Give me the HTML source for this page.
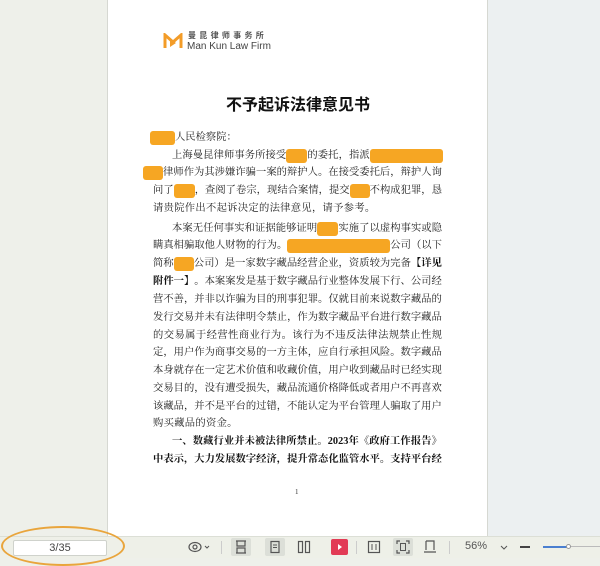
<!DOCTYPE html>
<html><head><meta charset="utf-8"><style>
*{margin:0;padding:0;box-sizing:border-box}
body{width:600px;height:558px;overflow:hidden;background:#eef0ea;position:relative;font-family:"Liberation Serif","Noto Serif CJK SC",serif;}
.rbg{position:absolute;left:488px;top:0;width:112px;height:536px;background:#ecf0f1}
.page{position:absolute;left:107px;top:0;width:381px;height:536px;background:#fff;border-left:1px solid #d6d8d2;border-right:1px solid #d6d8d2}
.l{position:absolute;left:153px;width:289px;font-size:10.3px;line-height:14px;color:#222;white-space:nowrap;display:flex;justify-content:space-between;align-items:center}
.b{display:inline-block;background:#f6a623;border-radius:3px;height:14px}
.bold{font-weight:bold;color:#111}
.tb{position:absolute;left:0;top:536px;width:600px;height:22px;background:#eef0e8;border-top:1px solid #dcdfd6}
.pg{position:absolute;left:13px;top:540px;width:94px;height:16px;background:#fff;border:1px solid #cfd2cc;border-radius:2px;font:11px "Liberation Sans",sans-serif;color:#444;text-align:center;line-height:15px}
.ell{position:absolute;left:1px;top:526px;width:124px;height:40px;border:2px solid #e9a53c;border-radius:50%}
.ic{position:absolute;top:540px;font:11px "Liberation Sans",sans-serif;color:#555}
</style></head><body>
<div class="rbg"></div>
<div class="page"></div>
<svg style="position:absolute;left:163px;top:33px" width="20" height="16" viewBox="0 0 20 16"><path d="M2 15V2l8 7 8-7v13" fill="none" stroke="#f39c28" stroke-width="3"/><path d="M7 6l6 4-6 4z" fill="#f39c28"/></svg>
<div style="position:absolute;left:188px;top:31px;font:bold 8px/9px 'Noto Sans CJK SC',sans-serif;color:#555;letter-spacing:3.3px">曼昆律师事务所</div>
<div style="position:absolute;left:187px;top:42px;font:10px/9px 'Liberation Sans',sans-serif;color:#444">Man Kun Law Firm</div>
<div style="position:absolute;left:0;width:596px;top:91px;text-align:center;font:bold 16px 'Noto Sans CJK SC',sans-serif;color:#111">不予起诉法律意见书</div>

<div class="l" style="top:131px;left:150px;justify-content:flex-start"><span class="b" style="width:25px"></span><span>人民检察院：</span></div>
<div class="l" style="top:149px;left:172px;width:271px"><span>上</span><span>海</span><span>曼</span><span>昆</span><span>律</span><span>师</span><span>事</span><span>务</span><span>所</span><span>接</span><span>受</span><span class="b" style="width:21px"></span><span>的</span><span>委</span><span>托</span><span>，</span><span>指</span><span>派</span><span class="b" style="width:73px"></span></div>
<div class="l" style="top:166px;left:143px;width:299px"><span class="b" style="width:20px"></span><span>律</span><span>师</span><span>作</span><span>为</span><span>其</span><span>涉</span><span>嫌</span><span>诈</span><span>骗</span><span>一</span><span>案</span><span>的</span><span>辩</span><span>护</span><span>人</span><span>。</span><span>在</span><span>接</span><span>受</span><span>委</span><span>托</span><span>后</span><span>，</span><span>辩</span><span>护</span><span>人</span><span>询</span></div>
<div class="l" style="top:184px"><span>问</span><span>了</span><span class="b" style="width:21px"></span><span>，</span><span>查</span><span>阅</span><span>了</span><span>卷</span><span>宗</span><span>，</span><span>现</span><span>结</span><span>合</span><span>案</span><span>情</span><span>，</span><span>提</span><span>交</span><span class="b" style="width:20px"></span><span>不</span><span>构</span><span>成</span><span>犯</span><span>罪</span><span>，</span><span>恳</span></div>
<div class="l" style="top:202px;justify-content:flex-start;letter-spacing:0.3px">请贵院作出不起诉决定的法律意见，请予参考。</div>
<div class="l" style="top:222px;left:172px;width:270px"><span>本</span><span>案</span><span>无</span><span>任</span><span>何</span><span>事</span><span>实</span><span>和</span><span>证</span><span>据</span><span>能</span><span>够</span><span>证</span><span>明</span><span class="b" style="width:21px"></span><span>实</span><span>施</span><span>了</span><span>以</span><span>虚</span><span>构</span><span>事</span><span>实</span><span>或</span><span>隐</span></div>
<div class="l" style="top:239px"><span>瞒</span><span>真</span><span>相</span><span>骗</span><span>取</span><span>他</span><span>人</span><span>财</span><span>物</span><span>的</span><span>行</span><span>为</span><span>。</span><span class="b" style="width:103px"></span><span>公</span><span>司</span><span>（</span><span>以</span><span>下</span></div>
<div class="l" style="top:257px"><span>简</span><span>称</span><span class="b" style="width:20px"></span><span>公</span><span>司</span><span>）</span><span>是</span><span>一</span><span>家</span><span>数</span><span>字</span><span>藏</span><span>品</span><span>经</span><span>营</span><span>企</span><span>业</span><span>，</span><span>资</span><span>质</span><span>较</span><span>为</span><span>完</span><span>备</span><span class="bold">【</span><span class="bold">详</span><span class="bold">见</span></div>
<div class="l" style="top:275px"><span class="bold">附</span><span class="bold">件</span><span class="bold">一</span><span class="bold">】</span><span>。</span><span>本</span><span>案</span><span>案</span><span>发</span><span>是</span><span>基</span><span>于</span><span>数</span><span>字</span><span>藏</span><span>品</span><span>行</span><span>业</span><span>整</span><span>体</span><span>发</span><span>展</span><span>下</span><span>行</span><span>、</span><span>公</span><span>司</span><span>经</span></div>
<div class="l" style="top:293px"><span>营</span><span>不</span><span>善</span><span>，</span><span>并</span><span>非</span><span>以</span><span>诈</span><span>骗</span><span>为</span><span>目</span><span>的</span><span>刑</span><span>事</span><span>犯</span><span>罪</span><span>。</span><span>仅</span><span>就</span><span>目</span><span>前</span><span>来</span><span>说</span><span>数</span><span>字</span><span>藏</span><span>品</span><span>的</span></div>
<div class="l" style="top:311px"><span>发</span><span>行</span><span>交</span><span>易</span><span>并</span><span>未</span><span>有</span><span>法</span><span>律</span><span>明</span><span>令</span><span>禁</span><span>止</span><span>，</span><span>作</span><span>为</span><span>数</span><span>字</span><span>藏</span><span>品</span><span>平</span><span>台</span><span>进</span><span>行</span><span>数</span><span>字</span><span>藏</span><span>品</span></div>
<div class="l" style="top:329px"><span>的</span><span>交</span><span>易</span><span>属</span><span>于</span><span>经</span><span>营</span><span>性</span><span>商</span><span>业</span><span>行</span><span>为</span><span>。</span><span>该</span><span>行</span><span>为</span><span>不</span><span>违</span><span>反</span><span>法</span><span>律</span><span>法</span><span>规</span><span>禁</span><span>止</span><span>性</span><span>规</span></div>
<div class="l" style="top:346px"><span>定</span><span>，</span><span>用</span><span>户</span><span>作</span><span>为</span><span>商</span><span>事</span><span>交</span><span>易</span><span>的</span><span>一</span><span>方</span><span>主</span><span>体</span><span>，</span><span>应</span><span>自</span><span>行</span><span>承</span><span>担</span><span>风</span><span>险</span><span>。</span><span>数</span><span>字</span><span>藏</span><span>品</span></div>
<div class="l" style="top:364px"><span>本</span><span>身</span><span>就</span><span>存</span><span>在</span><span>一</span><span>定</span><span>艺</span><span>术</span><span>价</span><span>值</span><span>和</span><span>收</span><span>藏</span><span>价</span><span>值</span><span>，</span><span>用</span><span>户</span><span>收</span><span>到</span><span>藏</span><span>品</span><span>时</span><span>已</span><span>经</span><span>实</span><span>现</span></div>
<div class="l" style="top:382px"><span>交</span><span>易</span><span>目</span><span>的</span><span>，</span><span>没</span><span>有</span><span>遭</span><span>受</span><span>损</span><span>失</span><span>，</span><span>藏</span><span>品</span><span>流</span><span>通</span><span>价</span><span>格</span><span>降</span><span>低</span><span>或</span><span>者</span><span>用</span><span>户</span><span>不</span><span>再</span><span>喜</span><span>欢</span></div>
<div class="l" style="top:400px"><span>该</span><span>藏</span><span>品</span><span>，</span><span>并</span><span>不</span><span>是</span><span>平</span><span>台</span><span>的</span><span>过</span><span>错</span><span>，</span><span>不</span><span>能</span><span>认</span><span>定</span><span>为</span><span>平</span><span>台</span><span>管</span><span>理</span><span>人</span><span>骗</span><span>取</span><span>了</span><span>用</span><span>户</span></div>
<div class="l" style="top:417px;justify-content:flex-start;letter-spacing:0.3px">购买藏品的资金。</div>
<div class="l bold" style="top:435px;left:172px;width:270px"><span>一、</span><span>数</span><span>藏</span><span>行</span><span>业</span><span>并</span><span>未</span><span>被</span><span>法</span><span>律</span><span>所</span><span>禁</span><span>止</span><span>。</span><span>2023</span><span>年</span><span>《</span><span>政</span><span>府</span><span>工</span><span>作</span><span>报</span><span>告</span><span>》</span></div>
<div class="l bold" style="top:453px"><span>中</span><span>表</span><span>示</span><span>，</span><span>大</span><span>力</span><span>发</span><span>展</span><span>数</span><span>字</span><span>经</span><span>济</span><span>，</span><span>提</span><span>升</span><span>常</span><span>态</span><span>化</span><span>监</span><span>管</span><span>水</span><span>平</span><span>。</span><span>支</span><span>持</span><span>平</span><span>台</span><span>经</span></div>
<div style="position:absolute;left:295px;top:488px;font:7px 'Liberation Serif',serif;color:#333">1</div>

<div class="tb"></div>
<div class="pg">3/35</div>
<div class="ell"></div>
<svg style="position:absolute;left:188px;top:540px" width="24" height="14" viewBox="0 0 24 14"><ellipse cx="7" cy="7" rx="6" ry="4.5" fill="none" stroke="#555" stroke-width="1.2"/><circle cx="7" cy="7" r="2" fill="none" stroke="#555" stroke-width="1.2"/><path d="M17 6l2 2 2-2" fill="none" stroke="#555"/></svg>
<div style="position:absolute;left:221px;top:541px;width:1px;height:13px;background:#ccc"></div>
<div style="position:absolute;left:231px;top:538px;width:20px;height:18px;background:#dcdfd8;border-radius:2px"></div>
<svg style="position:absolute;left:234px;top:540px" width="14" height="14"><path d="M2 1h10M2 13h10M3 1v5h8V1M3 13V8h8v5" fill="none" stroke="#555" stroke-width="1.2"/></svg>
<div style="position:absolute;left:265px;top:538px;width:20px;height:18px;background:#dcdfd8;border-radius:2px"></div>
<svg style="position:absolute;left:268px;top:540px" width="14" height="14"><rect x="3" y="1.5" width="8" height="11" fill="none" stroke="#555" stroke-width="1.2"/><path d="M5 5h4M5 7.5h4" stroke="#555"/></svg>
<svg style="position:absolute;left:297px;top:540px" width="14" height="14"><rect x="1.5" y="1.5" width="4" height="11" fill="none" stroke="#555" stroke-width="1.2"/><rect x="8.5" y="1.5" width="4" height="11" fill="none" stroke="#555" stroke-width="1.2"/></svg>
<div style="position:absolute;left:331px;top:539px;width:17px;height:16px;background:#e23a55;border-radius:2px"></div>
<svg style="position:absolute;left:335px;top:542px" width="10" height="10"><path d="M3 2l4 3-4 3z" fill="#fff"/></svg>
<div style="position:absolute;left:356px;top:541px;width:1px;height:13px;background:#ccc"></div>
<svg style="position:absolute;left:367px;top:540px" width="14" height="14"><rect x="1.5" y="1.5" width="11" height="11" fill="none" stroke="#555" stroke-width="1.2"/><path d="M5 4v6M9 4v6" stroke="#555"/></svg>
<div style="position:absolute;left:393px;top:538px;width:20px;height:18px;background:#dcdfd8;border-radius:2px"></div>
<svg style="position:absolute;left:396px;top:540px" width="14" height="14"><path d="M1 4V1h3M10 1h3v3M13 10v3h-3M4 13H1v-3" fill="none" stroke="#555" stroke-width="1.2"/><rect x="4.5" y="3.5" width="5" height="7" fill="none" stroke="#555"/></svg>
<svg style="position:absolute;left:423px;top:540px" width="14" height="14"><path d="M3 1h8v9M3 1v9M1 12h12" fill="none" stroke="#555" stroke-width="1.2"/></svg>
<div style="position:absolute;left:449px;top:541px;width:1px;height:13px;background:#ccc"></div>
<div class="ic" style="left:465px">56%</div>
<svg style="position:absolute;left:500px;top:543px" width="8" height="8"><path d="M1 3l3 3 3-3" fill="none" stroke="#555"/></svg>
<div style="position:absolute;left:520px;top:546px;width:10px;height:2px;background:#444"></div>
<div style="position:absolute;left:543px;top:546px;width:25px;height:2px;background:#4a7fd0"></div>
<div style="position:absolute;left:568px;top:546px;width:32px;height:1px;background:#bbb"></div>
<div style="position:absolute;left:566px;top:544px;width:5px;height:5px;border-radius:50%;background:#fff;border:1px solid #999"></div>
</body></html>
